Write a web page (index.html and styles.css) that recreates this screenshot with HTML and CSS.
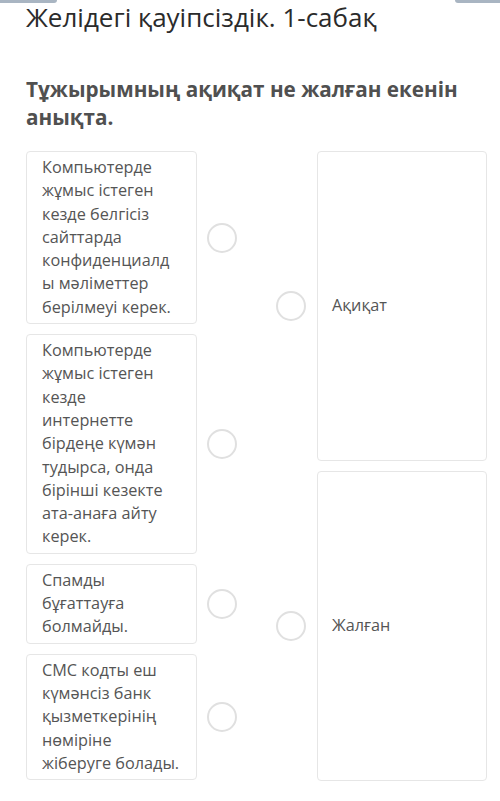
FILE: index.html
```html
<!DOCTYPE html>
<html lang="kk">
<head>
<meta charset="utf-8">
<title>Желідегі қауіпсіздік</title>
<link rel="stylesheet" href="styles.css">
</head>
<body>
<div class="page">
  <div class="topbar"><span class="tab tab-left"></span><span class="tab tab-right"></span></div>
  <h1 class="title">Желідегі қауіпсіздік. 1-сабақ</h1>
  <h2 class="question">Тұжырымның ақиқат не жалған екенін анықта.</h2>
  <div class="match">
    <div class="col-left">
      <div class="item">
        <div class="card">Компьютерде жұмыс істеген кезде белгісіз сайттарда конфиденциалды мәліметтер берілмеуі керек.</div>
        <span class="dot"></span>
      </div>
      <div class="item">
        <div class="card">Компьютерде жұмыс істеген кезде<br>интернетте бірдеңе күмән тудырса, онда бірінші кезекте ата-анаға айту керек.</div>
        <span class="dot"></span>
      </div>
      <div class="item">
        <div class="card">Спамды бұғаттауға болмайды.</div>
        <span class="dot"></span>
      </div>
      <div class="item">
        <div class="card">СМС кодты еш күмәнсіз банк қызметкерінің нөміріне жіберуге болады.</div>
        <span class="dot"></span>
      </div>
    </div>
    <div class="col-right">
      <div class="target">
        <span class="dot"></span>
        <div class="card card-target">Ақиқат</div>
      </div>
      <div class="target">
        <span class="dot"></span>
        <div class="card card-target">Жалған</div>
      </div>
    </div>
  </div>
</div>
</body>
</html>
```
FILE: styles.css
```css
html, body {
  margin: 0;
  padding: 0;
  background: #ffffff;
}
body {
  font-family: "Open Sans", "Noto Sans", sans-serif;
  color: #555555;
}
.page {
  width: 500px;
  height: 801px;
  overflow: hidden;
  box-sizing: border-box;
}
.topbar {
  display: flex;
  justify-content: space-between;
  height: 3px;
}
.tab {
  display: block;
  height: 3px;
  background: #a9b5c2;
}
.tab-left {
  width: 57px;
  border-bottom-right-radius: 3px;
}
.tab-right {
  width: 45px;
  border-bottom-left-radius: 3px;
}
.title {
  margin: -3px 0 0 26px;
  font-size: 26px;
  line-height: 34px;
  font-weight: 400;
  color: #2b2b2b;
}
.question {
  margin: 41px 20px 0 26px;
  font-size: 20.7px;
  line-height: 28px;
  font-weight: 700;
  color: #505050;
}
.match {
  display: flex;
  align-items: stretch;
  margin: 20px 0 0 26px;
  height: 630px;
}
.col-left {
  display: flex;
  flex-direction: column;
  gap: 10px;
}
.item {
  display: flex;
  align-items: center;
}
.card {
  box-sizing: border-box;
  border: 1px solid #e6e6e6;
  border-radius: 4px;
  background: #fff;
  font-size: 16.25px;
  line-height: 23.3px;
  color: #555;
}
.col-left .card {
  width: 171px;
  padding: 4px 14.5px 4px 15px;
  overflow-wrap: anywhere;
}
.dot {
  display: block;
  box-sizing: border-box;
  width: 30px;
  height: 30px;
  border: 2px solid #e0e0e0;
  border-radius: 50%;
  flex: none;
}
.col-left .dot {
  margin-left: 10px;
}
.col-right {
  display: flex;
  flex-direction: column;
  gap: 10px;
  margin-left: 39px;
}
.target {
  flex: 1;
  display: flex;
  align-items: center;
}
.card-target {
  align-self: stretch;
  display: flex;
  align-items: center;
  width: 170px;
  margin-left: 11px;
  padding: 0 14px;
}
```
